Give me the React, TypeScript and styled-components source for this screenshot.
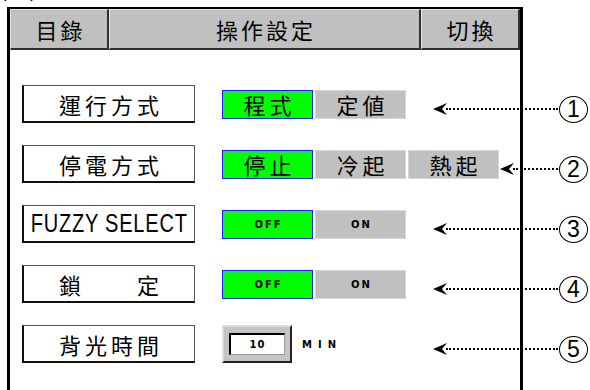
import styled, { createGlobalStyle } from 'styled-components'

/* --------------------- Style --------------------- */
const GlobalStyle = createGlobalStyle`
  html, body {
    margin: 0;
    padding: 0;
    background: #fff;
    overflow: hidden;
  }
  body {
    font-family: "Noto Sans CJK TC", "Noto Sans CJK SC", sans-serif;
    color: #000;
  }
`
const Page = styled.div`
  width: 590px;
  height: 390px;
  padding-left: 7px;
  box-sizing: border-box;
`
const Caption = styled.div`
  height: 7px;
  overflow: hidden;
  display: flex;
  margin-left: -7px;
  > span {
    display: block;
    font-size: 22px;
    line-height: 22px;
    margin-top: -24px;
    white-space: pre;
  }
  > .title {
    margin-left: 97px;
    letter-spacing: 2px;
  }
`
const Frame = styled.div`
  width: 516px;
  height: 400px;
  box-sizing: border-box;
  border-top: 2px solid #000;
  border-left: 3px solid #000;
  border-right: 3px solid #000;
`
const Header = styled.div`
  display: flex;
  height: 41px;
  background: #c0c0c0;
`
const HeadCell = styled.div<{ $w: number }>`
  width: ${(p) => p.$w}px;
  box-sizing: border-box;
  display: flex;
  align-items: center;
  justify-content: center;
  border-top: 1px solid #e4e4e4;
  border-left: 1px solid #e4e4e4;
  border-right: 2px solid #303030;
  border-bottom: 2px solid #303030;
  font-size: 22px;
  letter-spacing: 3px;
  padding-left: 3px;
`
const Body = styled.div`
  display: flex;
  flex-direction: column;
  gap: 22px;
  padding: 35px 0 0 12px;
  width: 566px;
`
const Row = styled.div`
  display: flex;
  align-items: center;
  height: 38px;
`
const Label = styled.div<{ $latin?: boolean }>`
  width: 173px;
  height: 38px;
  box-sizing: border-box;
  border: 1px solid #555;
  border-left: 2px solid #111;
  border-bottom: 2px solid #111;
  display: flex;
  align-items: center;
  justify-content: center;
  font-size: 22px;
  letter-spacing: ${(p) => (p.$latin ? '0' : '4px')};
  padding-left: ${(p) => (p.$latin ? '0' : '4px')};
  white-space: pre;
  overflow: hidden;
  > span {
    display: inline-block;
    font-family: "Liberation Sans", sans-serif;
    font-size: 25px;
    transform: scaleX(0.8);
    letter-spacing: 1px;
  }
`
const Options = styled.div`
  display: flex;
  gap: 2px;
  margin-left: 27px;
`
const Option = styled.div<{ $on?: boolean; $small?: boolean }>`
  width: 91px;
  height: 29px;
  box-sizing: border-box;
  display: flex;
  align-items: center;
  justify-content: center;
  background: ${(p) => (p.$on ? '#00ff00' : '#c0c0c0')};
  border: 1px solid ${(p) => (p.$on ? '#1a1aff' : '#d6d6d6')};
  font-size: ${(p) => (p.$small ? '10px' : '22px')};
  font-family: ${(p) =>
    p.$small ? '"DejaVu Sans", sans-serif' : '"Noto Sans CJK TC", sans-serif'};
  font-weight: ${(p) => (p.$small ? 'bold' : 'normal')};
  letter-spacing: ${(p) => (p.$small ? '2px' : '4px')};
  padding-left: ${(p) => (p.$small ? '2px' : '4px')};
`
const NumBox = styled.div`
  margin-left: 27px;
  width: 70px;
  height: 38px;
  box-sizing: border-box;
  background: #c4c4c4;
  border-top: 2px solid #dcdcdc;
  border-left: 2px solid #dcdcdc;
  border-right: 2px solid #222;
  border-bottom: 2px solid #222;
  display: flex;
  align-items: center;
  justify-content: center;
`
const NumField = styled.div`
  width: 56px;
  height: 22px;
  box-sizing: border-box;
  background: #fff;
  border-top: 2px solid #000;
  border-left: 2px solid #000;
  border-right: 1px solid #999;
  border-bottom: 1px solid #999;
  display: flex;
  align-items: center;
  justify-content: center;
  font-family: "DejaVu Sans", sans-serif;
  font-weight: bold;
  font-size: 10px;
  letter-spacing: 1px;
`
const Unit = styled.div`
  margin-left: 10px;
  font-family: "DejaVu Sans", sans-serif;
  font-weight: bold;
  font-size: 10px;
  letter-spacing: 6px;
`
const Annotation = styled.div<{ $w: number }>`
  margin-left: auto;
  margin-top: 10px;
  width: ${(p) => p.$w}px;
  display: flex;
  align-items: center;
  > svg {
    flex: none;
  }
`
const Dots = styled.div`
  flex: 1;
  height: 0;
  border-top: 2px dotted #000;
  margin: 0 1px 0 -1px;
`
const Num = styled.div`
  flex: none;
  width: 29px;
  height: 27px;
  box-sizing: border-box;
  border: 1.5px solid #000;
  border-radius: 50%;
  display: flex;
  align-items: center;
  justify-content: center;
  font-family: "Liberation Sans", sans-serif;
  font-size: 23px;
  line-height: 1;
`
/* ------------------------------------------------- */

const Pointer: React.FC<{ width: number; n: number }> = ({ width, n }) => (
  <Annotation $w={width}>
    <svg width="14" height="12" viewBox="0 0 14 12">
      <path d="M0 6 L14 0 L9 6 L14 12 Z" fill="#000" />
    </svg>
    <Dots />
    <Num>{n}</Num>
  </Annotation>
)

const App: React.FC = () => {
  return (
    <Page>
      <GlobalStyle />
      <Caption>
        <span>(一)</span>
        <span className="title">運行操作設定畫面</span>
      </Caption>
      <Frame>
        <Header>
          <HeadCell $w={99}>目錄</HeadCell>
          <HeadCell $w={312}>操作設定</HeadCell>
          <HeadCell $w={99}>切換</HeadCell>
        </Header>
        <Body>
          <Row>
            <Label>運行方式</Label>
            <Options>
              <Option $on>程式</Option>
              <Option>定値</Option>
            </Options>
            <Pointer width={155} n={1} />
          </Row>
          <Row>
            <Label>停電方式</Label>
            <Options>
              <Option $on>停止</Option>
              <Option>冷起</Option>
              <Option>熱起</Option>
            </Options>
            <Pointer width={88} n={2} />
          </Row>
          <Row>
            <Label $latin>
              <span>FUZZY SELECT</span>
            </Label>
            <Options>
              <Option $on $small>
                OFF
              </Option>
              <Option $small>ON</Option>
            </Options>
            <Pointer width={155} n={3} />
          </Row>
          <Row>
            <Label>鎖　　定</Label>
            <Options>
              <Option $on $small>
                OFF
              </Option>
              <Option $small>ON</Option>
            </Options>
            <Pointer width={155} n={4} />
          </Row>
          <Row>
            <Label>背光時間</Label>
            <NumBox>
              <NumField>10</NumField>
            </NumBox>
            <Unit>MIN</Unit>
            <Pointer width={155} n={5} />
          </Row>
        </Body>
      </Frame>
    </Page>
  )
}
export default App
